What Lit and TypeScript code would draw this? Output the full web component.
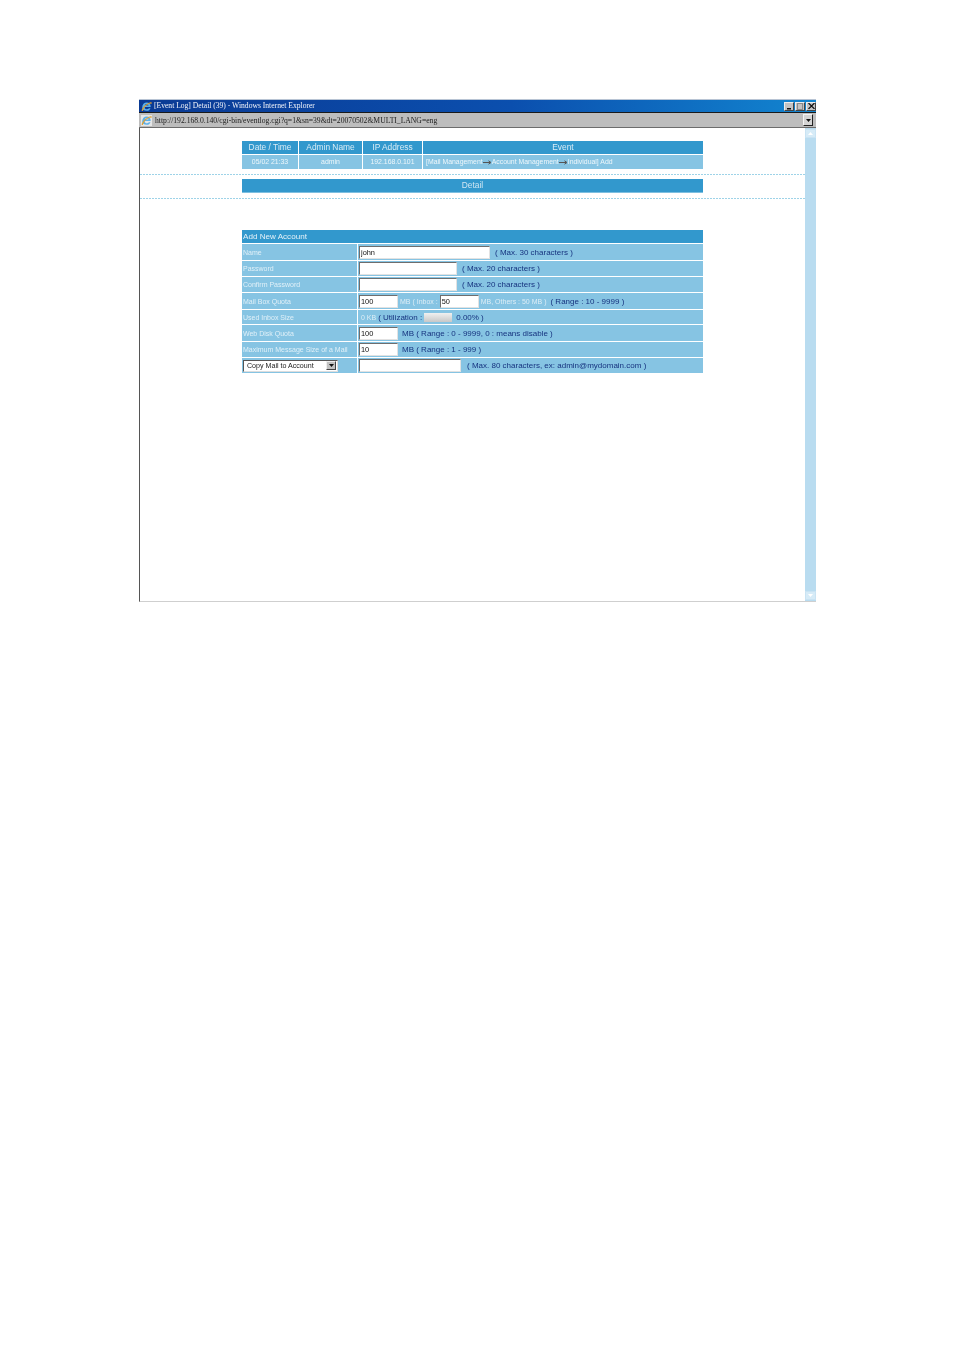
import { LitElement, html, css, svg } from "lit";
import { customElement } from "lit/decorators.js";

const ieIcon = svg`<svg width="11" height="11" viewBox="0 0 11 11"><path d="M1.2 6.6C1.2 3.4 3.2 1.5 5.8 1.5c2.3 0 3.9 1.700 3.900 4.400H3.600c0 1.500 1 2.400 2.300 2.400.9 0 1.600-.4 2-1.100h1.600C8.900 8.800 7.600 9.800 5.800 9.800 3.200 9.800 1.200 8.800 1.200 6.600zM3.700 4.600h3.900C7.400 3.500 6.800 2.900 5.800 2.900S4 3.500 3.700 4.600z" fill="#5bb0ea"/><path d="M.8 9.800C.2 8.600 3 4.200 7.500 2c1.900-.9 3-.9 3.200-.3.1.4-.2.9-.8 1.500.1-.5-.2-.8-1-.6C5.600 3.400 2.400 7.500 2 9.700c-.4.500-1 .500-1.200.100z" fill="#e0a030"/></svg>`;

@customElement("app-root")
export class AppRoot extends LitElement {
  static styles = css`
    :host { display: block; height: 1350px; background: #fff; font-family: "Liberation Sans", Arial, sans-serif; overflow: hidden; }
    .win { margin: 99px 0 0 139px; width: 677px; height: 503px; box-sizing: border-box; display: flex; flex-direction: column; background: #fff; border-left: 1px solid #555; border-bottom: 1px solid #cfcfcf; filter: blur(0.3px); }
    .title { height: 12px; margin-left: -1px; display: flex; align-items: center; gap: 1px; padding: 0 0 0 2px; background: linear-gradient(90deg, #0a3a94 0%, #0b4fae 55%, #1285d0 100%); border-top: 1px solid #b8c4d4; color: #f2f4fa; font: 7.6px/12px "Liberation Serif", serif; }
    .title .t { flex: 1; white-space: nowrap; margin-left: 1px; }
    .ctl { width: 10px; height: 9px; background: #c3c3c3; border: 1px solid; border-color: #eee #444 #444 #eee; box-sizing: border-box; display: flex; align-items: flex-end; justify-content: center; }
    .ctl svg { display: block; }
    .ctl.x { align-items: center; }
    .addr { height: 14px; margin-left: -1px; display: flex; align-items: center; gap: 3px; padding: 0 3px 0 2px; background: #bdbdbd; border-top: 1px solid #1a1a1a; border-bottom: 1px solid #6c6c6c; color: #1c1c1c; font: 7.65px/13px "Liberation Serif", serif; }
    .addr .ic { width: 11px; height: 11px; background: #e6e6e6; display: flex; }
    .addr .u { flex: 1; white-space: nowrap; }
    .drop { width: 10px; height: 12px; background: #d4d4d4; border: 1px solid; border-color: #f4f4f4 #222 #222 #f4f4f4; box-sizing: border-box; display: flex; align-items: center; justify-content: center; }
    .body { flex: 1; display: flex; min-height: 0; }
    .main { flex: 1; min-width: 0; padding-top: 13px; }
    .sb { width: 11px; padding: 1px 0; box-sizing: border-box; background: #b9dcf0; display: flex; flex-direction: column; justify-content: space-between; }
    .sbb { height: 9px; background: #d6ebf7; display: flex; align-items: center; justify-content: center; border: 1px solid #c9e3f3; box-sizing: border-box; }
    .wrap { width: 461px; margin-left: 102px; }
    .hdr, .row { display: grid; grid-template-columns: 56px 63px 59px 1fr; column-gap: 1px; text-align: center; }
    .hdr { height: 13px; font-size: 8.4px; line-height: 13px; color: #d9ecf6; margin-bottom: 1px; }
    .hdr div { background: #3298cd; }
    .row { height: 14px; font-size: 6.9px; line-height: 14px; color: #eef7fb; }
    .row div { background: #86c4e3; white-space: nowrap; overflow: hidden; }
    .row .ev { text-align: left; padding-left: 3px; }
    .ev svg { vertical-align: -1px; }
    .dash { height: 1px; background: repeating-linear-gradient(90deg, #9ed3e8 0 2px, #fff 2px 3px); }
    .d1 { margin-top: 5px; }
    .detail { width: 461px; margin: 4px 0 5px 102px; height: 13px; background: #3298cd; color: #cfe6f3; font-size: 8.4px; line-height: 13px; text-align: center; border-bottom: 1px solid #7dbfe0; }
    .form { margin: 31px 0 0 102px; width: 461px; }
    .fh { height: 13px; padding-left: 1px; background: #3298cd; color: #e3f1f8; font-size: 8.1px; line-height: 13px; margin-bottom: 1px; }
    .fr { display: grid; grid-template-columns: 115px 1fr; column-gap: 1px; margin-bottom: 1px; }
    .fr > div { background: #86c4e3; display: flex; align-items: center; white-space: nowrap; min-width: 0; }
    .l { padding-left: 1px; font-size: 7px; color: #e0f0f8; }
    .v { padding-left: 1px; gap: 4px; font-size: 8px; color: #16337f; }
    input { box-sizing: border-box; height: 13px; padding: 0 1px; margin: 0; background: #fff; border: 1px solid; border-color: #6e6e6e #e2e2e2 #e2e2e2 #6e6e6e; font: 7.4px/11px "Liberation Sans", sans-serif; color: #111; outline: none; }
    .w131 { width: 131px; }
    .w98 { width: 98px; }
    .w39 { width: 39px; }
    .w102 { width: 102px; }
    .inbox { margin-left: -2px; }
    .faint { font-size: 7px; color: #dcedf6; }
    .mb { margin-left: -2px; }
    .fm { margin-left: -2px; }
    .kb { margin-left: 2px; }
    .n1 { margin-left: 1px; }
    .n2 { margin-left: 2px; }
    .bar { width: 28px; height: 9px; margin-left: -2px; background: linear-gradient(#f0f0f0, #c8c8c8); }
    .sel { width: 95px; height: 12px; box-sizing: border-box; background: #fff; border: 1px solid; border-color: #555 #ddd #ddd #555; display: flex; align-items: center; justify-content: space-between; padding: 0 1px 0 3px; font-size: 7.1px; color: #222; }
    .sel i { width: 10px; height: 9px; background: #c2c2c2; border: 1px solid; border-color: #eee #444 #444 #eee; box-sizing: border-box; display: flex; align-items: center; justify-content: center; }
  `;

  private arrow() {
    return html`<svg width="9" height="5" viewBox="0 0 9 5"><path d="M0 2.500H7M5.500 .8 8 2.500 5.500 4.200" fill="none" stroke="#555" stroke-width="1"/></svg>`;
  }

  private tri(up = false, color = "#111", w = 5) {
    return html`<svg width=${w} height="3" viewBox="0 0 5 3"><path d=${up ? "M2.500 0 5 3H0z" : "M0 0H5L2.500 3z"} fill=${color}/></svg>`;
  }

  private frow(h: number, label: unknown, value: unknown) {
    return html`<div class="fr" style="height:${h}px"><div class="l">${label}</div><div class="v">${value}</div></div>`;
  }

  render() {
    return html`<div class="win">
      <div class="title">
        ${ieIcon}
        <span class="t">[Event Log] Detail (39) - Windows Internet Explorer</span>
        <span class="ctl"><svg width="5" height="5" viewBox="0 0 5 5"><path d="M0 3h4v1.500H0z" fill="#111"/></svg></span>
        <span class="ctl"><svg width="6" height="7" viewBox="0 0 6 7"><rect x=".5" y=".5" width="5" height="6" fill="none" stroke="#8a8a8a"/></svg></span>
        <span class="ctl x"><svg width="7" height="6" viewBox="0 0 7 6"><path d="M.5 0 6.500 6M6.500 0 .5 6" stroke="#111" stroke-width="1.200"/></svg></span>
      </div>
      <div class="addr">
        <span class="ic">${ieIcon}</span>
        <span class="u">http://192.168.0.140/cgi-bin/eventlog.cgi?q=1&amp;sn=39&amp;dt=20070502&amp;MULTI_LANG=eng</span>
        <span class="drop">${this.tri()}</span>
      </div>
      <div class="body">
        <div class="main">
          <div class="wrap">
            <div class="hdr"><div>Date / Time</div><div>Admin Name</div><div>IP Address</div><div>Event</div></div>
            <div class="row"><div>05/02 21:33</div><div>admin</div><div>192.168.0.101</div><div class="ev">[Mail Management${this.arrow()}Account Management${this.arrow()}Individual] Add</div></div>
          </div>
          <div class="dash d1"></div>
          <div class="detail">Detail</div>
          <div class="dash"></div>
          <div class="form">
            <div class="fh">Add New Account</div>
            ${this.frow(16, "Name", html`<input class="w131" value="john"><span class="n1">( Max. 30 characters )</span>`)}
            ${this.frow(15, "Password", html`<input class="w98"><span class="n1">( Max. 20 characters )</span>`)}
            ${this.frow(15, "Confirm Password", html`<input class="w98"><span class="n1">( Max. 20 characters )</span>`)}
            ${this.frow(16, "Mail Box Quota", html`<input class="w39" value="100"><span class="faint mb">MB ( Inbox :</span><input class="w39 inbox" value="50"><span class="faint fm">MB, Others : 50 MB )</span><span>( Range : 10 - 9999 )</span>`)}
            ${this.frow(14, "Used Inbox Size", html`<span class="faint kb">0 KB</span><span class="fm">( Utilization :</span><span class="bar"></span><span>0.00% )</span>`)}
            ${this.frow(16, "Web Disk Quota", html`<input class="w39" value="100"><span>MB ( Range : 0 - 9999, 0 : means disable )</span>`)}
            ${this.frow(15, "Maximum Message Size of a Mail", html`<input class="w39" value="10"><span>MB ( Range : 1 - 999 )</span>`)}
            ${this.frow(15, html`<span class="sel">Copy Mail to Account<i>${this.tri()}</i></span>`, html`<input class="w102"><span class="n2">( Max. 80 characters, ex: admin@mydomain.com )</span>`)}
          </div>
        </div>
        <div class="sb">
          <div class="sbb">${this.tri(true, "#fff")}</div>
          <div class="sbb">${this.tri(false, "#fff")}</div>
        </div>
      </div>
    </div>`;
  }
}
